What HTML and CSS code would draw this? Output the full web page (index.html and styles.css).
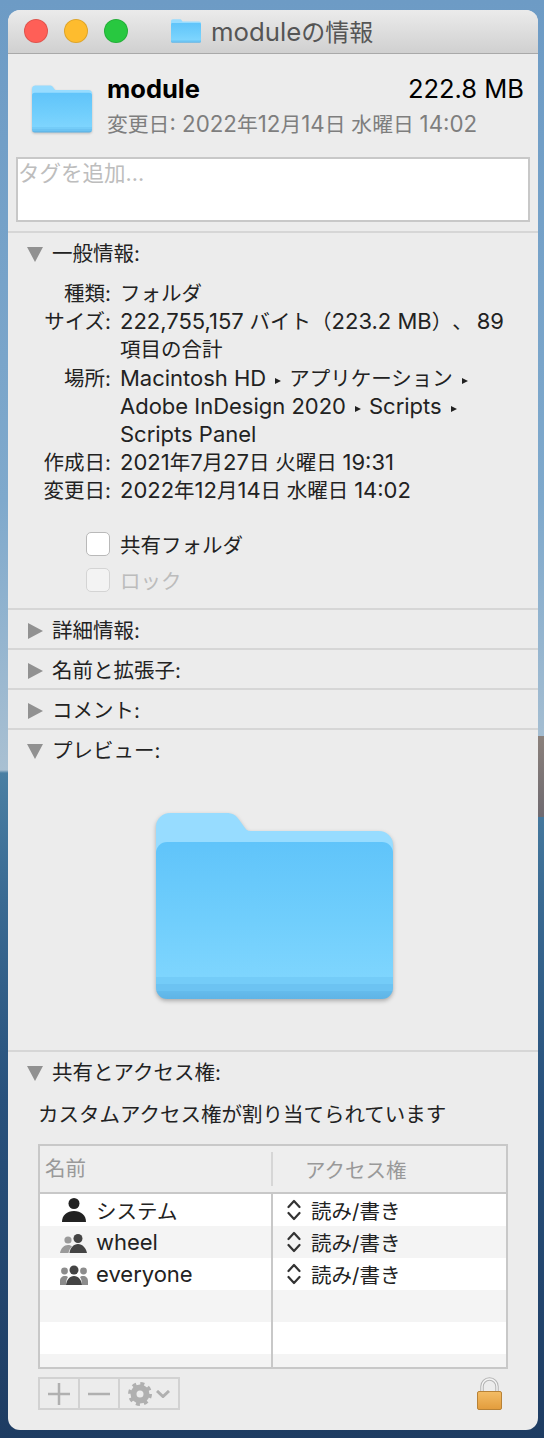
FILE: index.html
```html
<!DOCTYPE html>
<html lang="ja">
<head>
  <meta charset="UTF-8" />
  <title>moduleの情報</title>
  <link rel="stylesheet" href="styles.css">
</head>
<body>
  <!-- shared folder + gradients -->
  <svg class="sprite" aria-hidden="true">
    <defs>
      <linearGradient id="folder-front" x1="0" y1="0" x2="0" y2="1">
        <stop offset="0" stop-color="#60c4fa"/>
        <stop offset="0.5" stop-color="#70cefc"/>
        <stop offset="0.86" stop-color="#7ed5fe"/>
        <stop offset="0.86" stop-color="#74ccf8"/>
        <stop offset="0.905" stop-color="#74ccf8"/>
        <stop offset="0.905" stop-color="#6cc3f2"/>
        <stop offset="0.95" stop-color="#6cc3f2"/>
        <stop offset="0.95" stop-color="#64bbec"/>
        <stop offset="1" stop-color="#5fb4e6"/>
      </linearGradient>
      <linearGradient id="lock-body" x1="0" y1="0" x2="0" y2="1">
        <stop offset="0" stop-color="#f4bd66"/>
        <stop offset="1" stop-color="#e29c3c"/>
      </linearGradient>
      <symbol id="folder" viewBox="0 0 237 186">
        <path fill="#97dcff" d="M0 14a14 14 0 0 1 14-14h56c7 0 10 2 14 8l5 7c2 3 4 3 8 3h126a14 14 0 0 1 14 14v30H0z"/>
        <rect y="29" width="237" height="157" rx="11" fill="url(#folder-front)"/>
      </symbol>
    </defs>
  </svg>

  <div class="window">
    <div class="titlebar">
      <span class="light red"></span>
      <span class="light yellow"></span>
      <span class="light green"></span>
      <svg class="title-icon"><use href="#folder"/></svg>
      <span class="title-text"><span class="en">module</span>の情報</span>
    </div>

    <div class="head">
      <svg class="head-icon"><use href="#folder"/></svg>
      <div class="head-info">
        <div class="head-top">
          <span class="head-name">module</span>
          <span class="head-size">222.8 MB</span>
        </div>
        <div class="head-date">変更日<span class="en">: 2022</span>年<span class="en">12</span>月<span class="en">14</span>日 水曜日 <span class="en">14:02</span></div>
      </div>
    </div>

    <div class="tags">タグを追加...</div>

    <div class="section general">
      <div class="sec-head"><span class="arrow open"></span>一般情報:</div>
      <div class="info">
        <div class="lbl">種類:</div><div>フォルダ</div>
        <div class="lbl">サイズ:</div><div><span class="en">222,755,157</span> バイト（<span class="en">223.2 MB</span>）、<span class="en count">89</span><br>項目の合計</div>
        <div class="lbl">場所:</div>
        <div><span class="en">Macintosh HD</span><span class="sep"></span>アプリケーション<span class="sep"></span><br><span class="en">Adobe InDesign 2020</span><span class="sep"></span><span class="en">Scripts</span><span class="sep"></span><br><span class="en">Scripts Panel</span></div>
        <div class="lbl">作成日:</div><div><span class="en">2021</span>年<span class="en">7</span>月<span class="en">27</span>日 火曜日 <span class="en">19:31</span></div>
        <div class="lbl">変更日:</div><div><span class="en">2022</span>年<span class="en">12</span>月<span class="en">14</span>日 水曜日 <span class="en">14:02</span></div>
      </div>
      <div class="check-row"><span class="check"></span>共有フォルダ</div>
      <div class="check-row off"><span class="check"></span>ロック</div>
    </div>

    <div class="section closed"><div class="sec-head"><span class="arrow"></span>詳細情報:</div></div>
    <div class="section closed"><div class="sec-head"><span class="arrow"></span>名前と拡張子:</div></div>
    <div class="section closed"><div class="sec-head"><span class="arrow"></span>コメント:</div></div>

    <div class="section preview">
      <div class="sec-head"><span class="arrow open"></span>プレビュー:</div>
      <svg class="big-folder"><use href="#folder"/></svg>
    </div>

    <div class="section sharing">
      <div class="sec-head"><span class="arrow open"></span>共有とアクセス権:</div>
      <div class="share-note">カスタムアクセス権が割り当てられています</div>

      <div class="perm-table">
        <div class="perm-header">
          <div class="col-name">名前</div>
          <div class="col-access">アクセス権</div>
        </div>
        <div class="perm-row">
          <div class="cell-name">
            <svg class="user-icon" viewBox="0 0 28 24"><circle cx="14" cy="5.5" r="5.5" fill="#222"/><path fill="#222" d="M2 24c0-7 5-11 12-11s12 4 12 11z"/></svg>
            システム
          </div>
          <div class="cell-access"><svg class="stepper" viewBox="0 0 14 22"><path d="M1.500 8 7 2l5.500 6M1.500 14 7 20l5.500-6"/></svg>読み/書き</div>
        </div>
        <div class="perm-row">
          <div class="cell-name">
            <svg class="user-icon" viewBox="0 0 28 24"><circle cx="8" cy="10" r="3.6" fill="#9a9a9a"/><path fill="#9a9a9a" d="M0 23c1-5 4-8 8-8 2 0 3 .5 4 1.500-2 2-3 4-3.500 6.500z"/><circle cx="18" cy="8.500" r="4.500" fill="#444"/><path fill="#444" d="M9.500 23c.5-5 4-9 8.500-9s8 4 9 9z"/></svg>
            <span class="en">wheel</span>
          </div>
          <div class="cell-access"><svg class="stepper" viewBox="0 0 14 22"><path d="M1.500 8 7 2l5.500 6M1.500 14 7 20l5.500-6"/></svg>読み/書き</div>
        </div>
        <div class="perm-row">
          <div class="cell-name">
            <svg class="user-icon" viewBox="0 0 28 24"><circle cx="4.500" cy="9" r="3.400" fill="#8c8c8c"/><circle cx="23.500" cy="9" r="3.400" fill="#8c8c8c"/><path fill="#8c8c8c" d="M0 23v-4c0-3 2-5 5-5 1.500 0 2.500.5 3 1-1.500 2-2 5-2 8zM28 23v-4c0-3-2-5-5-5-1.500 0-2.500.5-3 1 1.500 2 2 5 2 8z"/><circle cx="14" cy="8" r="4.500" fill="#444"/><path fill="#444" d="M6 23c.5-5 3.500-9 8-9s7.500 4 8 9z"/></svg>
            <span class="en">everyone</span>
          </div>
          <div class="cell-access"><svg class="stepper" viewBox="0 0 14 22"><path d="M1.500 8 7 2l5.500 6M1.500 14 7 20l5.500-6"/></svg>読み/書き</div>
        </div>
        <div class="perm-row"><div class="cell-name"></div><div class="cell-access"></div></div>
        <div class="perm-row"><div class="cell-name"></div><div class="cell-access"></div></div>
        <div class="perm-row"><div class="cell-name"></div><div class="cell-access"></div></div>
      </div>

      <div class="perm-footer">
        <div class="btn-group">
          <div class="btn">
            <svg class="btn-icon" viewBox="0 0 22 22"><path d="M11 0v22M0 11h22"/></svg>
          </div>
          <div class="btn">
            <svg class="btn-icon" viewBox="0 0 22 22"><path d="M0 11h22"/></svg>
          </div>
          <div class="btn wide">
            <svg class="gear" viewBox="0 0 24 24"><circle cx="12" cy="12" r="6.500" fill="none" stroke="#b0b0b0" stroke-width="6"/><circle cx="12" cy="12" r="10.300" fill="none" stroke="#b0b0b0" stroke-width="3.400" stroke-dasharray="4 4.090"/></svg>
            <svg class="chev" viewBox="0 0 14 8"><path d="M1 1l6 5.500L13 1"/></svg>
          </div>
        </div>
        <svg class="lock" viewBox="0 0 25 33">
          <path d="M5 16V9.500a7.500 7.500 0 0 1 15 0V16" fill="none" stroke="#b4b4b4" stroke-width="3.500"/>
          <path d="M5 16V9.500a7.500 7.500 0 0 1 15 0V16" fill="none" stroke="#f4f4f4" stroke-width="1.400"/>
          <rect x="0.500" y="14.500" width="24" height="18" rx="1.500" fill="url(#lock-body)" stroke="#b88236"/>
        </svg>
      </div>
    </div>
  </div>
</body>
</html>
```

FILE: styles.css
```css
html, body {
  margin: 0;
  height: 1438px;
}

body {
  overflow: hidden;
  font-family: Inter, "Noto Sans CJK JP", sans-serif;
  font-size: 20.5px;
  color: #222;
  text-spacing-trim: space-all;
  background:
    linear-gradient(#8b817c, #6f6a70) right 736px / 6px 81px no-repeat,
    linear-gradient(#6d9bc5 0, #7fa9cc 500px, #a9c0d2 770px, #4a7fa3 773px, #3a6a92 900px, #28517c 1100px, #1e3c62 1438px);
}

/* latin runs sit larger than the kana around them */
.en {
  font-size: 1.073em;
  line-height: 1;
}

.count { margin-left: 4px; }

.sprite {
  display: block;
  width: 0;
  height: 0;
}

.window {
  width: 530px;
  height: 1420px;
  margin: 10px 0 0 8px;
  display: flex;
  flex-direction: column;
  background: #ececec;
  border-radius: 12px;
  overflow: hidden;
}

/* title bar */
.titlebar {
  flex: none;
  height: 44px;
  display: flex;
  align-items: center;
  gap: 16px;
  padding: 0 0 2px 16px;
  box-sizing: border-box;
  background: linear-gradient(#ebebeb, #d0d0d0);
  border-bottom: 1px solid #a9a9a9;
}

.light {
  width: 24px;
  height: 24px;
  box-sizing: border-box;
  border-radius: 50%;
  border: 1px solid rgba(0, 0, 0, 0.12);
}

.red { background: #ff5f57; }
.yellow { background: #febc2e; }
.green { background: #28c840; }

.title-icon {
  width: 30px;
  height: 24px;
  margin-left: 27px;
}

.title-text {
  margin-left: -6px;
  font-size: 24px;
  color: #555;
}

/* header */
.head {
  flex: none;
  height: 103px;
  display: flex;
  padding: 23px 14px 0 24px;
  box-sizing: border-box;
}

.head-icon {
  flex: none;
  width: 60px;
  height: 48px;
  margin-top: 8px;
  filter: drop-shadow(0 1px 1px rgba(0, 0, 0, 0.2));
}

.head-info {
  flex: 1;
  margin-left: 15px;
}

.head-top {
  display: flex;
  justify-content: space-between;
  line-height: 24px;
  font-size: 25.5px;
  color: #000;
}

.head-name { font-weight: 700; }

.head-date {
  margin-top: 11px;
  font-size: 20.8px;
  line-height: 26px;
  color: #7e7e7e;
}

.tags {
  flex: none;
  height: 65px;
  box-sizing: border-box;
  margin: 0 8px 9px;
  padding: 0;
  background: #fff;
  border: 2px solid #c8c8c8;
  font-size: 21.5px;
  line-height: 28px;
  color: #bdbdbd;
}

/* sections */
.section {
  flex: none;
  box-sizing: border-box;
  border-top: 2px solid #d6d6d6;
}

.sec-head {
  display: flex;
  align-items: center;
  height: 38px;
  padding: 2px 0 0 19px;
  line-height: 38px;
}

.arrow {
  flex: none;
  width: 0;
  height: 0;
  margin: 0 9px 0 1px;
  border-left: 15px solid #919191;
  border-top: 8.500px solid transparent;
  border-bottom: 8.500px solid transparent;
}

.arrow.open {
  margin: 0 9px 0 0;
  border-left: 8.500px solid transparent;
  border-right: 8.500px solid transparent;
  border-top: 15px solid #919191;
  border-bottom: 0;
}

.general { height: 377px; }
.closed { height: 40px; }
.preview { height: 322px; }
.sharing { flex: 1; }

.info {
  display: grid;
  grid-template-columns: 103px 1fr;
  column-gap: 9px;
  margin-top: 7px;
  line-height: 28.200px;
}

.lbl { text-align: right; }

.sep {
  display: inline-block;
  width: 0;
  height: 0;
  margin: 0 8px 2px 9px;
  border-left: 6px solid #222;
  border-top: 3.500px solid transparent;
  border-bottom: 3.500px solid transparent;
}

.check-row {
  display: flex;
  align-items: center;
  height: 36px;
  padding-left: 78px;
}

.info + .check-row { margin-top: 20px; }

.check {
  width: 24px;
  height: 24px;
  box-sizing: border-box;
  margin-right: 10px;
  background: #fff;
  border: 1px solid #b9b9b9;
  border-radius: 5px;
}

.check-row.off { color: #bcbcbc; }
.check-row.off .check {
  background: #f3f3f3;
  border-color: #d4d4d4;
}

.big-folder {
  display: block;
  width: 237px;
  height: 186px;
  margin: 43px 0 0 148px;
  filter: drop-shadow(0 2px 2px rgba(0, 0, 0, 0.28));
}

/* sharing */
.share-note {
  margin: 5px 0 0 30px;
  line-height: 36px;
}

.perm-table {
  box-sizing: border-box;
  width: 470px;
  height: 225px;
  margin: 11px 0 0 30px;
  border: 2px solid #c8c8c8;
  background: #fff;
  overflow: hidden;
}

.perm-header {
  display: flex;
  height: 48px;
  box-sizing: border-box;
  background: #eee;
  border-bottom: 2px solid #c8c8c8;
  color: #999;
  align-items: center;
}

.col-name {
  width: 233px;
  height: 34px;
  line-height: 34px;
  padding-left: 5px;
  box-sizing: border-box;
  border-right: 2px solid #d6d6d6;
}

.col-access { padding-left: 32px; }

.perm-row {
  display: flex;
  height: 32px;
}

.perm-row:nth-child(odd) { background: #f4f4f4; }

.cell-name {
  box-sizing: border-box;
  width: 233px;
  display: flex;
  align-items: center;
  padding-left: 20px;
  border-right: 2px solid #c8c8c8;
}

.cell-access {
  display: flex;
  align-items: center;
  padding-left: 14px;
}

.user-icon {
  width: 28px;
  height: 24px;
  margin-right: 8px;
}

.stepper {
  width: 14px;
  height: 22px;
  margin-right: 10px;
}

.stepper path {
  fill: none;
  stroke: #333;
  stroke-width: 2.200;
  stroke-linecap: round;
  stroke-linejoin: round;
}

.perm-footer {
  display: flex;
  justify-content: space-between;
  align-items: flex-end;
  margin: 8px 0 0 30px;
  width: 464px;
}

.btn-group {
  display: flex;
  height: 33px;
  box-sizing: border-box;
  border: 2px solid #d2d2d2;
}

.btn {
  width: 38px;
  display: flex;
  align-items: center;
  justify-content: center;
  gap: 4px;
  border-right: 2px solid #d2d2d2;
}

.btn.wide {
  width: 58px;
  border-right: 0;
}

.btn-icon {
  width: 22px;
  height: 22px;
}

.btn-icon path {
  fill: none;
  stroke: #b0b0b0;
  stroke-width: 2.500;
}

.gear {
  width: 24px;
  height: 24px;
}

.chev {
  width: 14px;
  height: 8px;
}

.chev path {
  fill: none;
  stroke: #b0b0b0;
  stroke-width: 3;
}

.lock {
  width: 25px;
  height: 33px;
}
```
